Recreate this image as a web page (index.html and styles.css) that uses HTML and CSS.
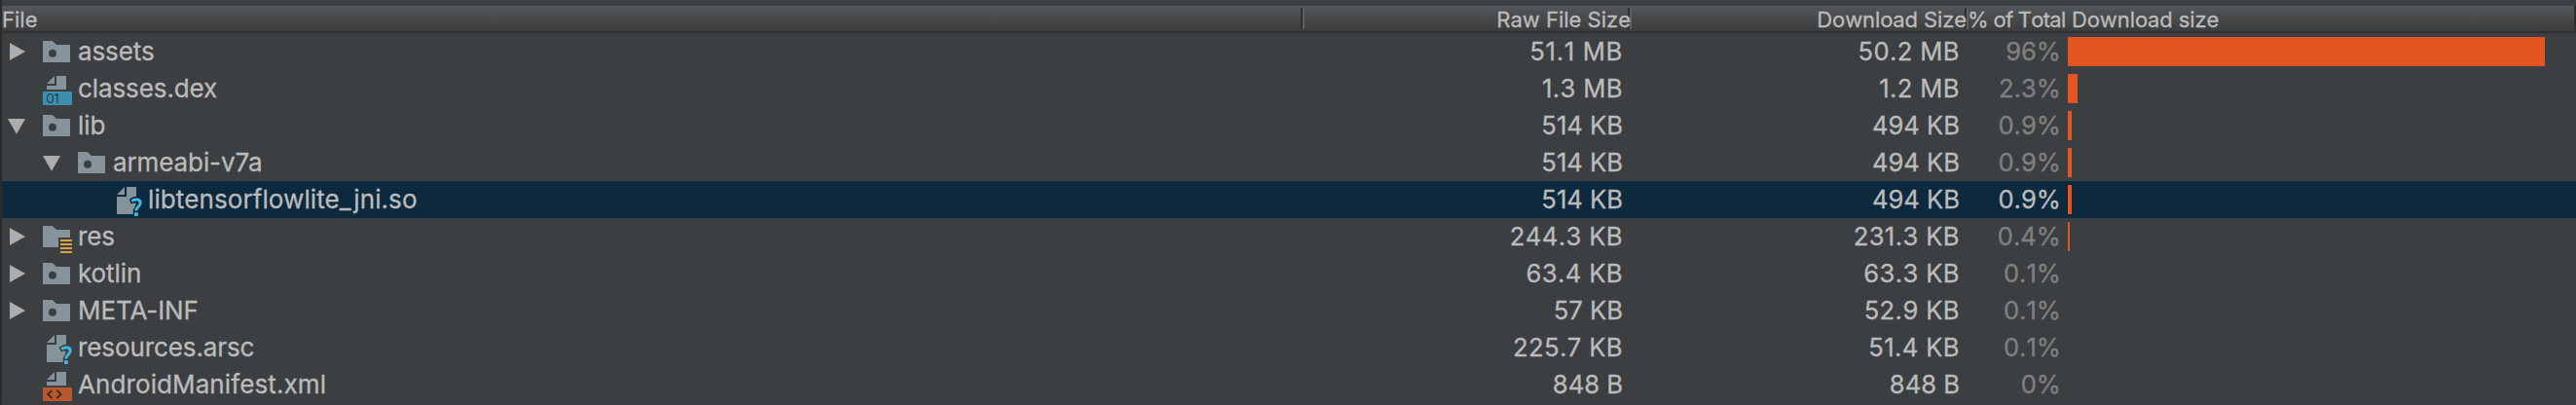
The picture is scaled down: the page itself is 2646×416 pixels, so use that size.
FILE: index.html
```
<!DOCTYPE html>
<html lang="en">
<head>
<meta charset="utf-8">
<title>APK Analyzer</title>
<link rel="stylesheet" href="styles.css">
</head>
<body>
<svg class="defs" aria-hidden="true">
  <symbol id="closed" viewBox="0 0 18 18"><path fill="#adadad" d="M2 0L18 9L2 18Z"/></symbol>
  <symbol id="open" viewBox="0 0 18 18"><path fill="#adadad" d="M0 2H18L9 17.8Z"/></symbol>
  <symbol id="folder" viewBox="0 0 16 16"><path fill="#87939a" fill-rule="evenodd" d="M1 13H15V4H8L6.7 2.7C6.2 2.2 5.6 2 5 2H1ZM6 6.4a2 2 0 1 1 0 4a2 2 0 1 1 0-4Z"/></symbol>
  <symbol id="resfolder" viewBox="0 0 16 16"><path fill="#87939a" d="M1 13H9V8H15V4H8L6.7 2.7C6.2 2.2 5.6 2 5 2H1Z"/><path fill="#d9a343" d="M10 9h6v1h-6zM10 11h6v1h-6zM10 13h6v1h-6zM10 15h6v1h-6z"/></symbol>
  <symbol id="xml" viewBox="0 0 16 16"><path fill="#87939a" d="M7 1L3 5H7ZM8 1V6H3V8H13V1Z"/><path fill="#b9572f" d="M1 9h15v7H1z"/><path fill="none" stroke="#4a2a1e" stroke-width="1" d="M5.7 10.5L3.6 12.5L5.7 14.5M8.2 10.5L10.3 12.5L8.2 14.5"/></symbol>
  <symbol id="unknown" viewBox="0 0 16 16"><path fill="#87939a" d="M7 1L3 5H7ZM8 1V6H3V15H11.4V12.8L12.4 11L13 9.4L11.5 9.3L10.3 9.8L9.4 7.3L11.2 6.2L13 5.9V1Z"/><path fill="none" stroke="#40b6e0" stroke-width="1.5" d="M10.6 8.2C12.2 7.1 15.2 7.1 15.1 9.2C15 11.2 12.9 11.1 12.9 13.3"/><path fill="#40b6e0" d="M12 14.1h1.9v1.9h-1.9z"/></symbol>
</svg>
<div class="table">
  <div class="header">
    <span class="h-file">File</span><span class="h-raw">Raw File Size</span><span class="h-dl">Download Size</span><span class="h-pct">% of Total</span><span class="h-bar">Download size</span>
  </div>
  <div class="row"><div class="name"><svg class="arrow"><use href="#closed"/></svg><svg class="icon"><use href="#folder"/></svg><span>assets</span></div><span class="raw mega">51.1 MB</span><span class="dl decimal">50.2 MB</span><span class="pct">96%</span><i class="bar" style="width:490px"></i></div>
  <div class="row"><div class="name"><i class="arrow"></i><svg class="icon" viewBox="0 0 16 16"><path fill="#87939a" d="M7 1L3 5H7ZM8 1V6H3V8H13V1Z"/><path fill="#3d8fb0" d="M1 9h15v7H1z"/><text class="glyph" x="2.6" y="15">01</text></svg><span>classes.dex</span></div><span class="raw decimal">1.3 MB</span><span class="dl decimal">1.2 MB</span><span class="pct">2.3%</span><i class="bar" style="width:10px"></i></div>
  <div class="row"><div class="name"><svg class="arrow"><use href="#open"/></svg><svg class="icon"><use href="#folder"/></svg><span>lib</span></div><span class="raw">514 KB</span><span class="dl">494 KB</span><span class="pct">0.9%</span><i class="bar" style="width:4px"></i></div>
  <div class="row"><div class="name level1"><svg class="arrow"><use href="#open"/></svg><svg class="icon"><use href="#folder"/></svg><span>armeabi-v7a</span></div><span class="raw">514 KB</span><span class="dl">494 KB</span><span class="pct">0.9%</span><i class="bar" style="width:4px"></i></div>
  <div class="row selected"><div class="name level2"><i class="arrow"></i><svg class="icon"><use href="#unknown"/></svg><span class="wide">libtensorflowlite_jni.so</span></div><span class="raw">514 KB</span><span class="dl">494 KB</span><span class="pct">0.9%</span><i class="bar" style="width:4px"></i></div>
  <div class="row"><div class="name"><svg class="arrow"><use href="#closed"/></svg><svg class="icon"><use href="#resfolder"/></svg><span>res</span></div><span class="raw decimal">244.3 KB</span><span class="dl decimal">231.3 KB</span><span class="pct">0.4%</span><i class="bar" style="width:2px"></i></div>
  <div class="row"><div class="name"><svg class="arrow"><use href="#closed"/></svg><svg class="icon"><use href="#folder"/></svg><span>kotlin</span></div><span class="raw decimal">63.4 KB</span><span class="dl decimal">63.3 KB</span><span class="pct">0.1%</span></div>
  <div class="row"><div class="name"><svg class="arrow"><use href="#closed"/></svg><svg class="icon"><use href="#folder"/></svg><span>META-INF</span></div><span class="raw">57 KB</span><span class="dl decimal">52.9 KB</span><span class="pct">0.1%</span></div>
  <div class="row"><div class="name"><i class="arrow"></i><svg class="icon"><use href="#unknown"/></svg><span>resources.arsc</span></div><span class="raw decimal">225.7 KB</span><span class="dl decimal">51.4 KB</span><span class="pct">0.1%</span></div>
  <div class="row"><div class="name"><i class="arrow"></i><svg class="icon"><use href="#xml"/></svg><span class="wide">AndroidManifest.xml</span></div><span class="raw">848 B</span><span class="dl">848 B</span><span class="pct">0%</span></div>
</div>
</body>
</html>
```
FILE: styles.css
```
body { margin: 0; background: #3c3f41; color: #bbbbbb; font-family: Inter, sans-serif; font-kerning: none; -webkit-text-stroke: 0.3px currentColor; overflow: hidden; }
.defs { display: none; }
.table { box-sizing: border-box; height: 416px; padding-top: 6px; border-left: 2px solid #2b2b2b; border-bottom: 1px solid #3d393e; }
.header { display: flex; box-sizing: border-box; height: 28px; border-bottom: 2px solid #2f3031; border-right: 2px solid #2f3031; background: linear-gradient(#535759, #3b3c3d); background-clip: padding-box; font-size: 22px; line-height: 28px; white-space: pre; }
.header span { flex: none; box-sizing: border-box; height: 26px; }
/* Two-tone column dividers at the right edge of the resizable columns */
.h-file, .h-raw, .h-dl { background: linear-gradient(90deg, #2f3133 50%, #5c5f61 50%) right 2px / 4px 22px no-repeat; }
.h-file { width: 1338px; }
.h-raw { width: 336px; padding-right: 1px; text-align: right; }
.h-dl { width: 346px; padding-right: 2px; text-align: right; letter-spacing: -0.1px; }
.header .h-pct { width: 107px; margin-left: -1px; letter-spacing: -0.7px; }
.h-bar { letter-spacing: -0.1px; }
.row { display: grid; grid-template-columns: 1336px 329px 346px 104px 1fr; height: 38px; font-size: 25.6px; line-height: 38px; white-space: pre; }
.selected { background: #0d293e; }
.name { display: flex; font-size: 26px; font-kerning: normal; letter-spacing: -0.1px; }
.wide { letter-spacing: 0.1px; }
.level1 { padding-left: 36px; }
.level2 { padding-left: 72px; }
.arrow { width: 18px; height: 18px; margin: 10px 16px 0 6px; flex: none; }
.icon { width: 32px; height: 32px; margin: 4px 6px 0 0; flex: none; }
.raw, .dl, .pct { text-align: right; }
.decimal { letter-spacing: 0.4px; }
.mega { letter-spacing: 0.7px; }
.pct { color: #808080; }
.selected .pct { color: #bbbbbb; }
.bar { display: block; height: 30px; margin: 4px 0 0 7px; background: #e35521; }
.glyph { font-size: 6.8px; fill: #233f4b; letter-spacing: -0.3px; -webkit-text-stroke: 0.15px #233f4b; }
```
